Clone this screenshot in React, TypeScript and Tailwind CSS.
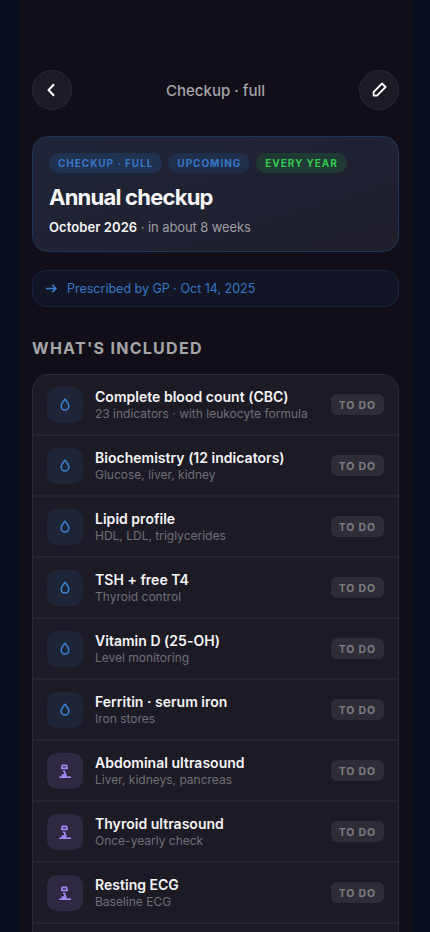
import React from "react";

const items = [
  { title: "Complete blood count (CBC)", note: "23 indicators · with leukocyte formula", kind: "blood" },
  { title: "Biochemistry (12 indicators)", note: "Glucose, liver, kidney", kind: "blood" },
  { title: "Lipid profile", note: "HDL, LDL, triglycerides", kind: "blood" },
  { title: "TSH + free T4", note: "Thyroid control", kind: "blood" },
  { title: "Vitamin D (25-OH)", note: "Level monitoring", kind: "blood" },
  { title: "Ferritin · serum iron", note: "Iron stores", kind: "blood" },
  { title: "Abdominal ultrasound", note: "Liver, kidneys, pancreas", kind: "scan" },
  { title: "Thyroid ultrasound", note: "Once-yearly check", kind: "scan" },
  { title: "Resting ECG", note: "Baseline ECG", kind: "scan" },
];

const DropIcon = () => (
  <svg width="14" height="14" viewBox="0 0 14 14" fill="none" stroke="currentColor" strokeWidth="1.5" strokeLinejoin="round">
    <path d="M7 1.2C5.2 3.4 3.2 5.7 3.2 8.3a3.8 3.8 0 0 0 7.6 0C10.8 5.7 8.8 3.4 7 1.2Z" />
  </svg>
);

const ScanIcon = () => (
  <svg width="14" height="16" viewBox="0 0 14 16" fill="none" stroke="currentColor" strokeWidth="1.6" strokeLinejoin="round">
    <path d="M4.2 2.4h4.4l.6 3H3.6Z" />
    <path d="M5 8.200h1.7v2l1 .8v3" />
    <path d="M3.600 11.200h4.400V14H3.600Z" fill="currentColor" stroke="none" />
    <path d="M1.200 14.200h11.800" />
  </svg>
);

const ItemRow = ({ item }) => (
  <div className="flex h-[61px] items-center border-b-2 border-[#25232e] px-3.5 pt-px">
    <div
      className={
        item.kind === "blood"
          ? "flex size-9 items-center justify-center rounded-[10px] bg-[#1e2537] text-[#3b82d6]"
          : "flex size-9 items-center justify-center rounded-[10px] bg-[#2e2840] text-[#a286f6]"
      }
    >
      {item.kind === "blood" ? <DropIcon /> : <ScanIcon />}
    </div>
    <div className="ml-3 min-w-0 flex-1 pt-px">
      <div className="text-[14px] font-semibold leading-4 tracking-[0.02px] text-[#f5f5f5]">{item.title}</div>
      <div className="pt-px text-[12px] leading-4 text-[#706f77]">{item.note}</div>
    </div>
    <span className="mb-px rounded-md bg-[#2e2c36] px-2 pb-0.5 pt-1 text-[10.5px] font-bold leading-[15px] tracking-[0.86px] text-[#7c7b82]">
      TO DO
    </span>
  </div>
);

const App = () => {
  return (
    <div className="h-[932px] overflow-hidden bg-[#060e1c] pl-[19px] font-['Inter',sans-serif]">
      <main className="flex h-full w-[393px] flex-col bg-[#110e19] px-[13px] pt-[70px]">
        <header className="flex items-center justify-between">
          <button className="flex size-10 items-center justify-center rounded-full border border-[#2b2933] bg-[#1c1a25] text-white">
            <svg width="16" height="16" viewBox="0 0 16 16" fill="none" stroke="currentColor" strokeWidth="2">
              <path d="M10 2.3 4.6 8l5.4 5.7" />
            </svg>
          </button>
          <h1 className="pt-0.5 text-[15px] font-medium leading-5 text-[#a5a4a8]">Checkup · full</h1>
          <button className="flex size-10 items-center justify-center rounded-full border border-[#2b2933] bg-[#1c1a25] text-white">
            <svg width="18" height="18" viewBox="0 0 18 18" fill="none" stroke="currentColor" strokeWidth="1.8" strokeLinejoin="round">
              <path d="M3.6 14.6v-3.4L12 2.5 15.6 6 7 14.6Z" />
            </svg>
          </button>
        </header>

        <section className="mt-[26px] h-[116px] shrink-0 rounded-2xl border border-[#203756] bg-linear-to-br from-[#1f2639] to-[#1f1e2b] px-4 pt-4">
          <div className="flex gap-1.5 text-[10px] font-bold leading-5 tracking-[0.96px]">
            <span className="rounded-full bg-[#213250] px-[9px] text-[#3478c8]">CHECKUP · FULL</span>
            <span className="rounded-full bg-[#202e49] px-[9px] text-[#3478c8]">UPCOMING</span>
            <span className="rounded-full bg-[#213934] px-[9px] text-[#32ca50]">EVERY YEAR</span>
          </div>
          <h2 className="mt-[11px] text-[22px] font-bold leading-[26px] tracking-[-0.77px] text-[#f6f6f7]">Annual checkup</h2>
          <p className="mt-2 text-[13px] leading-[18px] tracking-[-0.1px] text-[#9d9da6]">
            <b className="font-semibold tracking-[0.08px] text-[#f5f5f5]">October 2026</b> · in about 8 weeks
          </p>
        </section>

        <div className="mt-[18px] flex h-[37px] shrink-0 items-center rounded-[14px] border border-[#182641] bg-[#111524] pl-3 text-[12.5px] text-[#3478c8]">
          <svg width="14" height="14" viewBox="0 0 14 14" fill="none" stroke="#3b82d6" strokeWidth="1.6">
            <path d="M1 6.5h10M7.2 2.8l3.7 3.7-3.7 3.7" />
          </svg>
          <span className="ml-2 pt-0.5">Prescribed by GP · Oct 14, 2025</span>
        </div>

        <h3 className="mt-[31px] text-[16px] font-bold leading-5 tracking-[1.28px] text-[#a5a4a8]">WHAT'S INCLUDED</h3>
        <section className="-mb-10 mt-4 flex-1 overflow-hidden rounded-2xl border border-[#2b2933] bg-[#1c1a25]">
          {items.map((item) => (
            <ItemRow key={item.title} item={item} />
          ))}
        </section>
      </main>
    </div>
  );
};

export default App;
